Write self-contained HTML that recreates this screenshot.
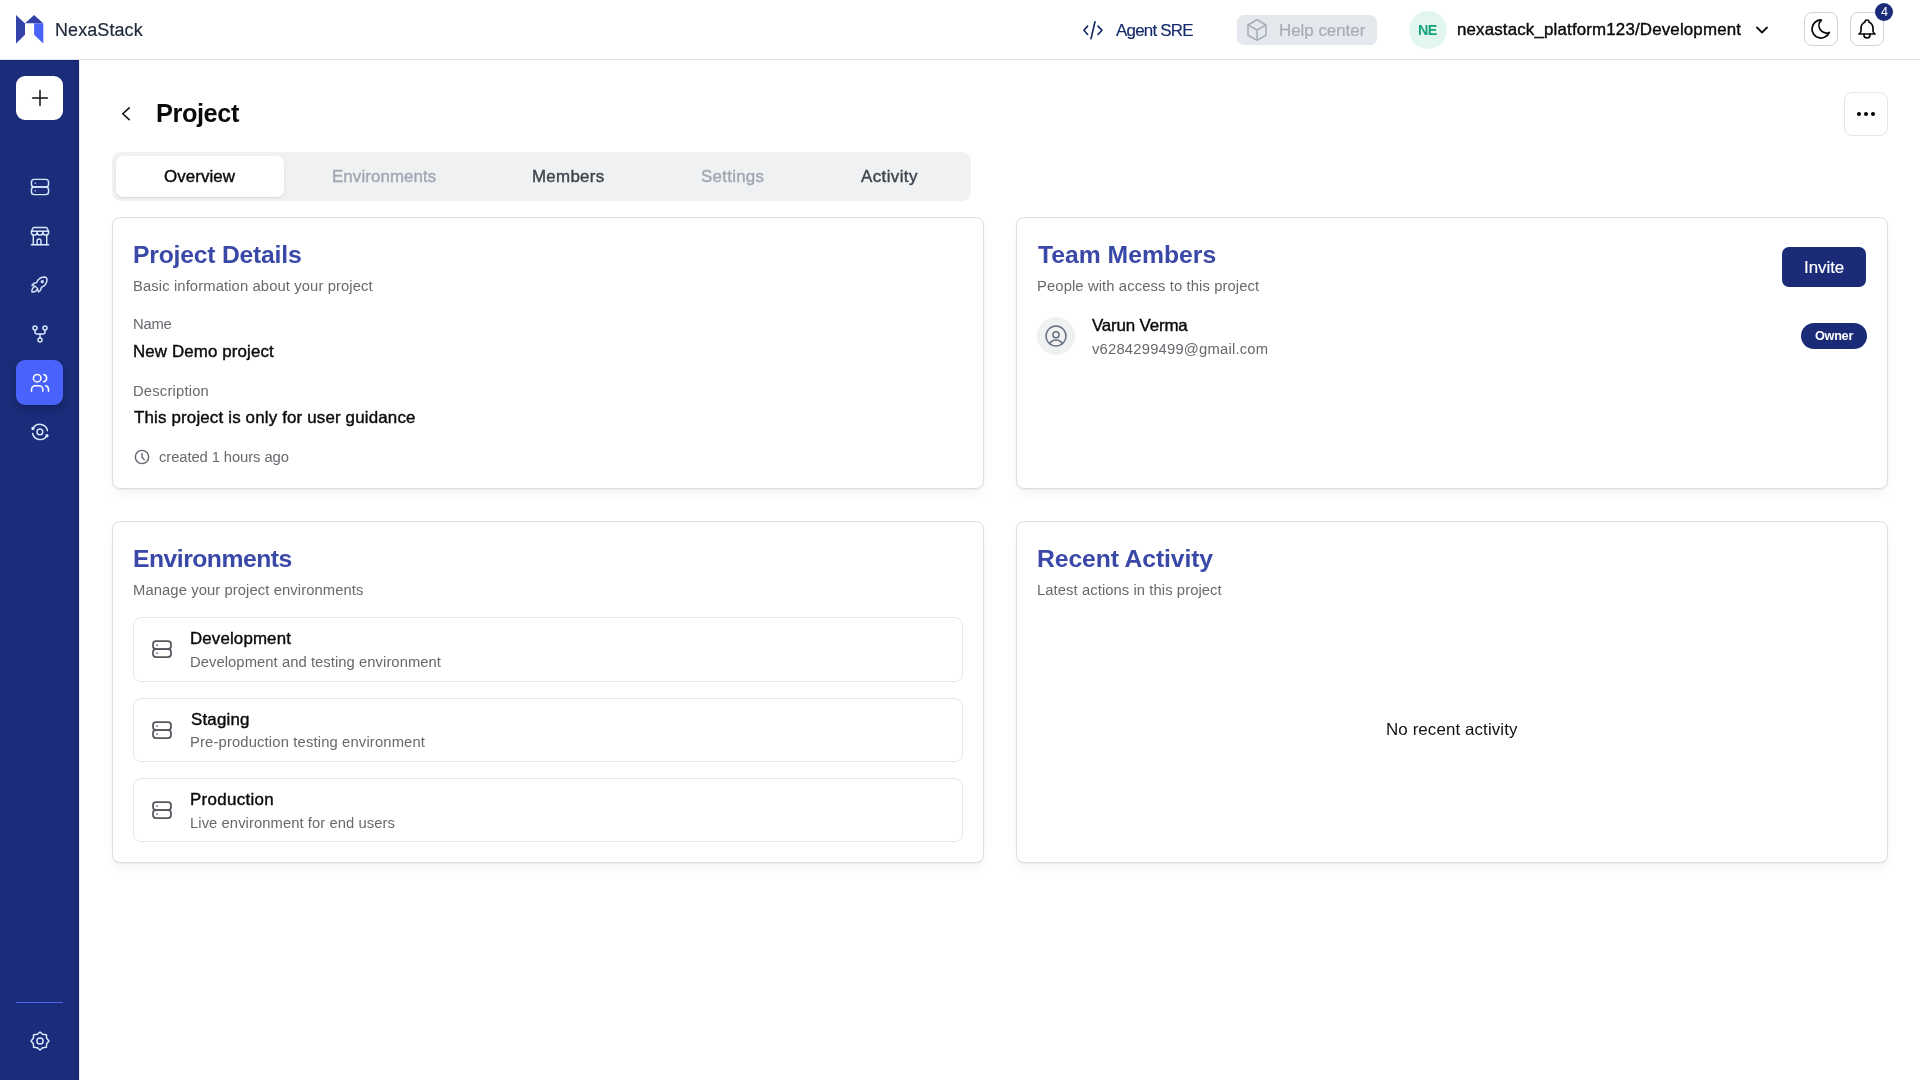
<!DOCTYPE html>
<html><head><meta charset="utf-8">
<style>
*{box-sizing:border-box;margin:0;padding:0}
html,body{width:1920px;height:1080px;overflow:hidden;background:#fff;font-family:"Liberation Sans",sans-serif}
.a{position:absolute}
.t{position:absolute;white-space:nowrap;will-change:transform}
svg{position:absolute;overflow:visible}
.card{position:absolute;background:#fff;border:1px solid #dadfe5;border-radius:8px;box-shadow:0 1px 2px rgba(0,0,0,.05),0 7px 14px -3px rgba(0,0,0,.05)}
.env{position:absolute;left:133px;width:830px;height:64px;border:1px solid #e4e6ea;border-radius:8px;background:#fff}
</style></head><body>
<!-- header -->
<div class="a" style="left:0;top:0;width:1920px;height:60px;background:#fff;border-bottom:1px solid #e1e5ea"></div>
<svg style="left:0;top:0" width="60" height="60" viewBox="0 0 60 60">
  <polygon points="16,15 25,23.6 25,34.8 16,43.6" fill="#3443a9"/>
  <polygon points="25.1,23.3 34.1,15 43.2,23.3" fill="#3341a6"/>
  <polygon points="34.1,23.3 43.3,23.3 43.3,43.5 34.1,34.8" fill="#4a63fd"/>
</svg>
<!-- agent sre code icon -->
<svg style="left:1081px;top:17.5px" width="24" height="24" viewBox="0 0 24 24" fill="none" stroke="#0f2362" stroke-width="1.6" stroke-linecap="round" stroke-linejoin="round">
  <path d="M6.6 8.1l-3.7 4.2l3.7 4.2"/><path d="M17 8.1l4 4.2l-4 4.2"/><path d="M14 3.8l-4 16.8"/>
</svg>
<!-- help center -->
<div class="a" style="left:1237px;top:15px;width:140px;height:30px;border-radius:7px;background:#e5e8ec"></div>
<svg style="left:1237px;top:10px" width="40" height="40" viewBox="1237 10 40 40" fill="none" stroke="#a7b0bb" stroke-width="1.6" stroke-linejoin="round">
  <path d="M1257 19.8L1266 25V35.3L1257 40.3L1248 35.3V25Z"/><path d="M1248 25L1257 30L1266 25M1257 30V40.3"/>
</svg>
<!-- avatar -->
<div class="a" style="left:1409px;top:11px;width:38px;height:38px;border-radius:50%;background:#e3f5ef"></div>
<!-- chevron down -->
<svg style="left:1752px;top:20px" width="20" height="20" viewBox="0 0 24 24" fill="none" stroke="#111" stroke-width="2.2" stroke-linecap="round" stroke-linejoin="round"><path d="M6 9l6 6 6-6"/></svg>
<!-- moon button -->
<div class="a" style="left:1804px;top:12px;width:34px;height:34px;border:1px solid #ccd3dc;border-radius:8px"></div>
<svg style="left:1809px;top:17px" width="24" height="24" viewBox="0 0 24 24" fill="none" stroke="#0a0a0a" stroke-width="1.75" stroke-linecap="round" stroke-linejoin="round"><path d="M12 3c.132 0 .263 0 .393 0a7.5 7.5 0 0 0 7.92 12.446a9 9 0 1 1 -8.313 -12.454z"/></svg>
<!-- bell button -->
<div class="a" style="left:1850px;top:12px;width:34px;height:34px;border:1px solid #ccd3dc;border-radius:8px"></div>
<svg style="left:1854.9px;top:16.9px" width="24" height="24" viewBox="0 0 24 24" fill="none" stroke="#0a0a0a" stroke-width="1.7" stroke-linecap="round" stroke-linejoin="round"><path d="M10 5a2 2 0 1 1 4 0a7 7 0 0 1 4 6v3a4 4 0 0 0 2 3h-16a4 4 0 0 0 2 -3v-3a7 7 0 0 1 4 -6"/><path d="M9 17v1a3 3 0 0 0 6 0v-1"/></svg>
<div class="a" style="left:1875px;top:2.5px;width:18px;height:18px;border-radius:50%;background:#1b2b7a"></div>

<!-- sidebar -->
<div class="a" style="left:0;top:60px;width:79px;height:1020px;background:#1b2d7a;border-top:1px solid #11256f;border-right:1px solid #11256f;box-shadow:1px 0 0 #f0f2f2"></div>
<div class="a" style="left:16px;top:76px;width:47px;height:44px;border-radius:9px;background:#fff"></div>
<svg style="left:27.5px;top:86px" width="24" height="24" viewBox="0 0 24 24" fill="none" stroke="#111" stroke-width="1.5" stroke-linecap="round"><path d="M12 4.6v14.8M4.6 12h14.8"/></svg>
<div class="a" style="left:16px;top:360px;width:47px;height:45px;border-radius:9px;background:#4b63fd;box-shadow:0 4px 8px rgba(0,0,20,.25)"></div>

<!-- sidebar icons (Tabler-like) -->
<svg style="left:27.5px;top:174.5px" width="24" height="24" viewBox="-0.6 -0.6 25.2 25.2" fill="none" stroke="#d8e6fb" stroke-width="1.55" stroke-linecap="round" stroke-linejoin="round">
  <path d="M3 7a3 3 0 0 1 3 -3h12a3 3 0 0 1 3 3v2a3 3 0 0 1 -3 3h-12a3 3 0 0 1 -3 -3z"/><path d="M3 15a3 3 0 0 1 3 -3h12a3 3 0 0 1 3 3v2a3 3 0 0 1 -3 3h-12a3 3 0 0 1 -3 -3z"/><path d="M7 8v.01M7 16v.01"/>
</svg>
<svg style="left:27.5px;top:223.5px" width="24" height="24" viewBox="-0.5 -0.6 25 25" fill="none" stroke="#d8e6fb" stroke-width="1.5" stroke-linecap="round" stroke-linejoin="round">
  <path d="M3 21h18"/><path d="M3 7v1a3 3 0 0 0 6 0v-1m0 1a3 3 0 0 0 6 0v-1m0 1a3 3 0 0 0 6 0v-1h-18l2 -4h14l2 4"/><path d="M5 21v-10.15"/><path d="M19 21v-10.15"/><path d="M9 21v-4a2 2 0 0 1 4 0v4"/>
</svg>
<svg style="left:27.5px;top:272.5px" width="24" height="24" viewBox="-0.2 -0.2 25.5 25.5" fill="none" stroke="#d8e6fb" stroke-width="1.5" stroke-linecap="round" stroke-linejoin="round">
  <path d="M4 13a8 8 0 0 1 7 7a6 6 0 0 0 3 -5a9 9 0 0 0 6 -8a3 3 0 0 0 -3 -3a9 9 0 0 0 -8 6a6 6 0 0 0 -5 3"/><path d="M7 14a6 6 0 0 0 -3 6a6 6 0 0 0 6 -3"/><circle cx="15" cy="9" r="1"/>
</svg>
<svg style="left:27.5px;top:321.5px" width="24" height="24" viewBox="0 0 24 24" fill="none" stroke="#d8e6fb" stroke-width="1.5" stroke-linecap="round" stroke-linejoin="round">
  <circle cx="12" cy="18" r="2"/><circle cx="7" cy="6" r="2"/><circle cx="17" cy="6" r="2"/><path d="M7 8v2a2 2 0 0 0 2 2h6a2 2 0 0 0 2 -2v-2"/><path d="M12 12v4"/>
</svg>
<svg style="left:27.5px;top:370.5px" width="24" height="24" viewBox="-0.77 -0.6 25.5 25.5" fill="none" stroke="#ffffff" stroke-width="1.6" stroke-linecap="round" stroke-linejoin="round">
  <circle cx="9" cy="7" r="4"/><path d="M3 21v-2a4 4 0 0 1 4 -4h4a4 4 0 0 1 4 4v2"/><path d="M16 3.13a4 4 0 0 1 0 7.75"/><path d="M21 21v-2a4 4 0 0 0 -3 -3.85"/>
</svg>
<svg style="left:27.5px;top:419.5px" width="24" height="24" viewBox="-0.63 -0.63 25.26 25.26" fill="none" stroke="#d8e6fb" stroke-width="1.55" stroke-linecap="round" stroke-linejoin="round">
  <path d="M4.6 8.3A8.2 8.2 0 0 1 19.9 10.6"/><path d="M19.3 15.9A8.2 8.2 0 0 1 4.2 13.6"/><circle cx="4.6" cy="8.3" r="1" fill="#d8e6fb"/><circle cx="19.3" cy="15.9" r="1" fill="#d8e6fb"/><circle cx="11.9" cy="11.9" r="3"/>
</svg>
<div class="a" style="left:16px;top:1002px;width:47px;height:1px;background:#4f66f0"></div>
<svg style="left:27.5px;top:1029.4px" width="24" height="24" viewBox="0 0 24 24" fill="none" stroke="#d8e6fb" stroke-width="1.5" stroke-linejoin="round">
  <path d="M12.00 3.00L14.76 5.35L18.36 5.64L18.65 9.24L21.00 12.00L18.65 14.76L18.36 18.36L14.76 18.65L12.00 21.00L9.24 18.65L5.64 18.36L5.35 14.76L3.00 12.00L5.35 9.24L5.64 5.64L9.24 5.35Z"/><circle cx="12" cy="12" r="3.1"/>
</svg>

<!-- page header -->
<svg style="left:114px;top:102px" width="24" height="24" viewBox="0 0 24 24" fill="none" stroke="#111" stroke-width="1.6" stroke-linecap="round" stroke-linejoin="round"><path d="M15.2 5.8L8.8 11.75L15.2 17.7"/></svg>
<div class="a" style="left:1844px;top:92px;width:44px;height:44px;border:1px solid #e3e5e9;border-radius:8px"></div>
<div class="a" style="left:1856.9px;top:111.9px;width:4.2px;height:4.2px;border-radius:50%;background:#000"></div>
<div class="a" style="left:1863.9px;top:111.9px;width:4.2px;height:4.2px;border-radius:50%;background:#000"></div>
<div class="a" style="left:1870.9px;top:111.9px;width:4.2px;height:4.2px;border-radius:50%;background:#000"></div>

<!-- tabs -->
<div class="a" style="left:112px;top:152px;width:859px;height:49px;border-radius:9px;background:#f0f1f3"></div>
<div class="a" style="left:116px;top:156px;width:168px;height:41px;border-radius:7px;background:#fff;box-shadow:0 1px 2px rgba(0,0,0,.12)"></div>

<!-- cards -->
<div class="card" style="left:112px;top:217px;width:872px;height:272px"></div>
<div class="card" style="left:1016px;top:217px;width:872px;height:272px"></div>
<div class="card" style="left:112px;top:521px;width:872px;height:342px"></div>
<div class="card" style="left:1016px;top:521px;width:872px;height:342px"></div>

<!-- clock -->
<svg style="left:133.75px;top:449px" width="16" height="16" viewBox="0 0 24 24" fill="none" stroke="#62666d" stroke-width="2.1" stroke-linecap="round" stroke-linejoin="round"><circle cx="12" cy="12" r="10"/><path d="M12 6.5v5.5l3.3 4"/></svg>

<!-- member -->
<div class="a" style="left:1037px;top:317px;width:38px;height:38px;border-radius:50%;background:#f0f1f3"></div>
<svg style="left:1043.7px;top:324.25px" width="24" height="24" viewBox="0 0 24 24" fill="none" stroke="#687381" stroke-width="1.5" stroke-linecap="round" stroke-linejoin="round"><circle cx="12" cy="12" r="10"/><circle cx="12" cy="10.75" r="3.1"/><path d="M5.6 19.7C7.2 17 9.5 15.9 12 15.9C14.5 15.9 16.8 17 18.4 19.7"/></svg>
<div class="a" style="left:1782px;top:247px;width:84px;height:40px;border-radius:7px;background:#1b2b78"></div>
<div class="a" style="left:1801px;top:323px;width:66px;height:25.5px;border-radius:13px;background:#1b2b78"></div>

<!-- env items -->
<div class="env" style="top:617px;height:65px"></div>
<div class="env" style="top:698px"></div>
<div class="env" style="top:778px"></div>
<svg style="left:150.1px;top:636.9px" width="24" height="24" viewBox="0 0 24 24" fill="none" stroke="#54575e" stroke-width="1.75" stroke-linecap="round" stroke-linejoin="round"><path d="M3 7a3 3 0 0 1 3 -3h12a3 3 0 0 1 3 3v2a3 3 0 0 1 -3 3h-12a3 3 0 0 1 -3 -3z"/><path d="M3 15a3 3 0 0 1 3 -3h12a3 3 0 0 1 3 3v2a3 3 0 0 1 -3 3h-12a3 3 0 0 1 -3 -3z"/><path d="M7 8v.01M7 16v.01"/></svg>
<svg style="left:150.1px;top:717.9px" width="24" height="24" viewBox="0 0 24 24" fill="none" stroke="#54575e" stroke-width="1.75" stroke-linecap="round" stroke-linejoin="round"><path d="M3 7a3 3 0 0 1 3 -3h12a3 3 0 0 1 3 3v2a3 3 0 0 1 -3 3h-12a3 3 0 0 1 -3 -3z"/><path d="M3 15a3 3 0 0 1 3 -3h12a3 3 0 0 1 3 3v2a3 3 0 0 1 -3 3h-12a3 3 0 0 1 -3 -3z"/><path d="M7 8v.01M7 16v.01"/></svg>
<svg style="left:150.1px;top:797.9px" width="24" height="24" viewBox="0 0 24 24" fill="none" stroke="#54575e" stroke-width="1.75" stroke-linecap="round" stroke-linejoin="round"><path d="M3 7a3 3 0 0 1 3 -3h12a3 3 0 0 1 3 3v2a3 3 0 0 1 -3 3h-12a3 3 0 0 1 -3 -3z"/><path d="M3 15a3 3 0 0 1 3 -3h12a3 3 0 0 1 3 3v2a3 3 0 0 1 -3 3h-12a3 3 0 0 1 -3 -3z"/><path d="M7 8v.01M7 16v.01"/></svg>

<div class="t" style="left:55.12px;top:17px;font-size:17.96px;line-height:27px;letter-spacing:0.109px;color:#1e293b;-webkit-text-stroke:0.2px currentColor;">NexaStack</div>
<div class="t" style="left:1116.10px;top:18px;font-size:16.91px;line-height:25px;letter-spacing:-0.759px;color:#13296b;-webkit-text-stroke:0.15px currentColor;">Agent SRE</div>
<div class="t" style="left:1279.12px;top:18px;font-size:16.91px;line-height:25px;letter-spacing:-0.013px;color:#a3abb6;-webkit-text-stroke:0.15px currentColor;">Help center</div>
<div class="t" style="left:1418.12px;top:19px;font-size:14.37px;line-height:22px;letter-spacing:-0.575px;color:#12a37a;font-weight:700;">NE</div>
<div class="t" style="left:1457.17px;top:17px;font-size:16.91px;line-height:25px;letter-spacing:0.151px;color:#0a0a0a;-webkit-text-stroke:0.4px currentColor;">nexastack_platform123/Development</div>
<div class="t" style="left:155.78px;top:94px;font-size:25.36px;line-height:38px;letter-spacing:-0.442px;color:#0a0a0a;font-weight:700;">Project</div>
<div class="t" style="left:164.45px;top:164px;font-size:16.91px;line-height:25px;letter-spacing:0.068px;color:#0a0a0a;-webkit-text-stroke:0.4px currentColor;">Overview</div>
<div class="t" style="left:332.02px;top:164px;font-size:16.91px;line-height:25px;letter-spacing:0.086px;color:#a0a7b2;-webkit-text-stroke:0.4px currentColor;">Environments</div>
<div class="t" style="left:532.38px;top:164px;font-size:16.91px;line-height:25px;letter-spacing:0.271px;color:#3d434c;-webkit-text-stroke:0.4px currentColor;">Members</div>
<div class="t" style="left:701.00px;top:164px;font-size:16.91px;line-height:25px;letter-spacing:0.268px;color:#a0a7b2;-webkit-text-stroke:0.4px currentColor;">Settings</div>
<div class="t" style="left:861.25px;top:164px;font-size:16.91px;line-height:25px;letter-spacing:0.411px;color:#3d434c;-webkit-text-stroke:0.4px currentColor;">Activity</div>
<div class="t" style="left:133.47px;top:236px;font-size:24.73px;line-height:37px;letter-spacing:-0.221px;color:#3a48a8;font-weight:700;">Project Details</div>
<div class="t" style="left:132.97px;top:275px;font-size:14.79px;line-height:22px;letter-spacing:0.111px;color:#68696f;">Basic information about your project</div>
<div class="t" style="left:132.97px;top:313px;font-size:14.79px;line-height:22px;letter-spacing:-0.208px;color:#68696f;">Name</div>
<div class="t" style="left:132.72px;top:339px;font-size:16.91px;line-height:25px;letter-spacing:0.108px;color:#0a0a0a;-webkit-text-stroke:0.4px currentColor;">New Demo project</div>
<div class="t" style="left:132.97px;top:380px;font-size:14.79px;line-height:22px;letter-spacing:0.185px;color:#68696f;">Description</div>
<div class="t" style="left:133.72px;top:405px;font-size:16.91px;line-height:25px;letter-spacing:0.164px;color:#0a0a0a;-webkit-text-stroke:0.4px currentColor;">This project is only for user guidance</div>
<div class="t" style="left:159.28px;top:446px;font-size:14.79px;line-height:22px;letter-spacing:-0.089px;color:#68696f;">created 1 hours ago</div>
<div class="t" style="left:1038.30px;top:236px;font-size:24.73px;line-height:37px;letter-spacing:0.000px;color:#3a48a8;font-weight:700;">Team Members</div>
<div class="t" style="left:1036.88px;top:275px;font-size:14.79px;line-height:22px;letter-spacing:0.110px;color:#68696f;">People with access to this project</div>
<div class="t" style="left:1091.97px;top:313px;font-size:16.91px;line-height:25px;letter-spacing:-0.172px;color:#0a0a0a;-webkit-text-stroke:0.4px currentColor;">Varun Verma</div>
<div class="t" style="left:1092.10px;top:338px;font-size:14.79px;line-height:22px;letter-spacing:0.204px;color:#68696f;">v6284299499@gmail.com</div>
<div class="t" style="left:1803.50px;top:255px;font-size:16.91px;line-height:25px;letter-spacing:-0.045px;color:#ffffff;-webkit-text-stroke:0.15px currentColor;">Invite</div>
<div class="t" style="left:1814.80px;top:327px;font-size:12.68px;line-height:19px;letter-spacing:-0.281px;color:#ffffff;font-weight:700;">Owner</div>
<div class="t" style="left:133.47px;top:540px;font-size:24.73px;line-height:37px;letter-spacing:-0.511px;color:#3a48a8;font-weight:700;">Environments</div>
<div class="t" style="left:132.97px;top:579px;font-size:14.79px;line-height:22px;letter-spacing:0.090px;color:#68696f;">Manage your project environments</div>
<div class="t" style="left:189.88px;top:626px;font-size:16.91px;line-height:25px;letter-spacing:0.125px;color:#0a0a0a;-webkit-text-stroke:0.4px currentColor;">Development</div>
<div class="t" style="left:190.12px;top:651px;font-size:14.79px;line-height:22px;letter-spacing:0.059px;color:#68696f;">Development and testing environment</div>
<div class="t" style="left:190.50px;top:707px;font-size:16.91px;line-height:25px;letter-spacing:0.175px;color:#0a0a0a;-webkit-text-stroke:0.4px currentColor;">Staging</div>
<div class="t" style="left:190.12px;top:731px;font-size:14.79px;line-height:22px;letter-spacing:0.148px;color:#68696f;">Pre-production testing environment</div>
<div class="t" style="left:189.88px;top:787px;font-size:16.91px;line-height:25px;letter-spacing:0.322px;color:#0a0a0a;-webkit-text-stroke:0.4px currentColor;">Production</div>
<div class="t" style="left:190.12px;top:812px;font-size:14.79px;line-height:22px;letter-spacing:0.068px;color:#68696f;">Live environment for end users</div>
<div class="t" style="left:1036.88px;top:540px;font-size:24.73px;line-height:37px;letter-spacing:-0.111px;color:#3a48a8;font-weight:700;">Recent Activity</div>
<div class="t" style="left:1037.08px;top:579px;font-size:14.79px;line-height:22px;letter-spacing:0.079px;color:#68696f;">Latest actions in this project</div>
<div class="t" style="left:1385.83px;top:717px;font-size:16.91px;line-height:25px;letter-spacing:0.106px;color:#111111;">No recent activity</div>
<div class="t" style="left:1880.75px;top:3px;font-size:12.68px;line-height:19px;letter-spacing:0.000px;color:#ffffff;">4</div>
</body></html>
